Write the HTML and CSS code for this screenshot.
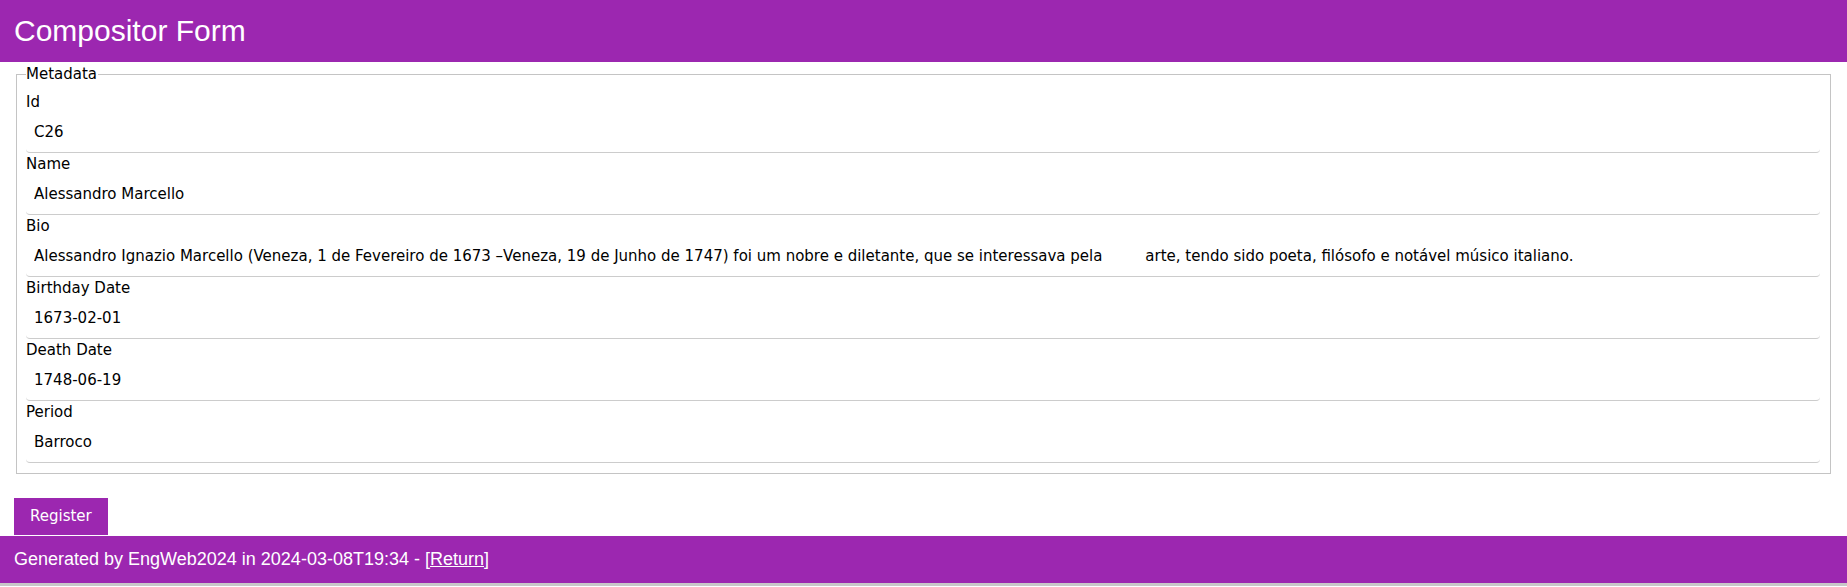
FILE: index.html
```html
<!DOCTYPE html>
<html lang="pt">
<head>
<meta charset="utf-8">
<title>Compositor Form</title>
<link rel="stylesheet" href="styles.css">
</head>
<body>
<div class="page">
  <header class="bar">
    <h2 class="title">Compositor Form</h2>
  </header>
  <form class="form">
    <fieldset class="meta">
      <legend class="legend">Metadata</legend>
      <label class="label">Id</label>
      <input class="field" type="text" value="C26">
      <label class="label">Name</label>
      <input class="field" type="text" value="Alessandro Marcello">
      <label class="label">Bio</label>
      <input class="field" type="text" value="Alessandro Ignazio Marcello (Veneza, 1 de Fevereiro de 1673 –Veneza, 19 de Junho de 1747) foi um nobre e diletante, que se interessava pela         arte, tendo sido poeta, filósofo e notável músico italiano.">
      <label class="label">Birthday Date</label>
      <input class="field" type="text" value="1673-02-01">
      <label class="label">Death Date</label>
      <input class="field" type="text" value="1748-06-19">
      <label class="label">Period</label>
      <input class="field" type="text" value="Barroco">
    </fieldset>
    <button class="btn" type="button">Register</button>
  </form>
  <footer class="bar foot">
    <h5 class="foot-text">Generated by EngWeb2024 in 2024-03-08T19:34 - [<a class="link" href="#">Return</a>]</h5>
  </footer>
</div>
</body>
</html>
```

FILE: styles.css
```css
html, body {
  margin: 0;
  padding: 0;
  font-family: "DejaVu Sans", Verdana, sans-serif;
  font-size: 15px;
  line-height: 1.5;
  color: #000;
  background: #fff;
}

.page {
  display: flex;
  flex-direction: column;
}

.bar {
  background: #9c27b0;
  color: #fff;
  padding: 0 14px;
}

.title {
  margin: 10px 0;
  font-family: "Liberation Sans", Arial, sans-serif;
  font-weight: 400;
  font-size: 30px;
  line-height: 42px;
}

.form {
  padding: 1px 14px 0 14px;
  display: flex;
  flex-direction: column;
  align-items: flex-start;
}

.meta {
  align-self: stretch;
  margin: 0 2px;
  border: 1px solid #c4c4c4;
  padding: 5px 10px 10px 9px;
  display: flex;
  flex-direction: column;
  min-width: 0;
}

.legend {
  padding: 0 1px 0 0;
  margin-left: 0;
}

.label {
  display: block;
}

.field {
  display: block;
  width: 100%;
  box-sizing: border-box;
  padding: 8px;
  border: none;
  border-bottom: 1px solid #ccc;
  border-radius: 4px;
  font: inherit;
  line-height: 1.5;
  height: 39.5px;
  color: #000;
  background: #fff;
  margin: 0;
  outline: none;
  white-space: pre;
}

.btn {
  margin: 24px 0 1px 0;
  border: none;
  background: #9c27b0;
  color: #fff;
  font: inherit;
  line-height: 1.5;
  padding: 7.5px 16px;
  cursor: pointer;
}

.foot {
  border-bottom: 3px solid #c8c8c8;
}

.foot-text {
  margin: 10px 0;
  font-family: "Liberation Sans", Arial, sans-serif;
  font-weight: 400;
  font-size: 18px;
  line-height: 27px;
}

.link {
  color: #fff;
  text-decoration: underline;
}
```
